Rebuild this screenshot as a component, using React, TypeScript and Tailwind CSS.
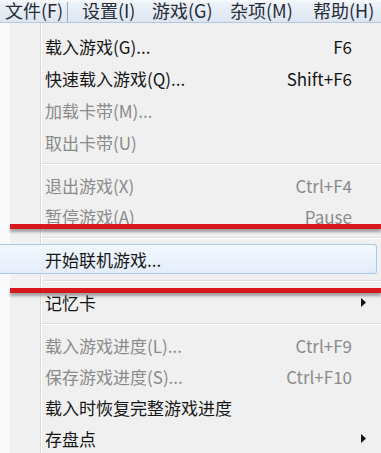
import React from 'react';

type Item = {
  label: string;
  keys?: string;
  disabled?: boolean;
  sub?: boolean;
  hot?: boolean;
  h?: string;
};

type Entry = Item | 'sep';

const entries: Entry[] = [
  { label: '载入游戏(G)...', keys: 'F6', h: 'h-[32px]' },
  { label: '快速载入游戏(Q)...', keys: 'Shift+F6', h: 'h-[32px]' },
  { label: '加载卡带(M)...', disabled: true, h: 'h-[32px]' },
  { label: '取出卡带(U)', disabled: true, h: 'h-[32px]' },
  'sep',
  { label: '退出游戏(X)', keys: 'Ctrl+F4', disabled: true },
  { label: '暂停游戏(A)', keys: 'Pause', disabled: true },
  'sep',
  { label: '开始联机游戏...', hot: true },
  'sep',
  { label: '记忆卡', sub: true },
  'sep',
  { label: '载入游戏进度(L)...', keys: 'Ctrl+F9', disabled: true },
  { label: '保存游戏进度(S)...', keys: 'Ctrl+F10', disabled: true },
  { label: '载入时恢复完整游戏进度' },
  { label: '存盘点', sub: true },
];

const Arrow = () => (
  <svg width="6" height="9" viewBox="0 0 6 9" className="mr-[14px] ml-auto">
    <polygon points="0,0 5,4.5 0,9" fill="#111" />
  </svg>
);

const Row = ({ item }: { item: Item }) => {
  const color = item.disabled ? 'text-[#8a8a8a]' : 'text-[#161616]';
  if (item.hot) {
    return (
      <div className="h-[31px] flex items-start">
        <div className="h-[30px] w-[377px] flex items-center pl-[45px] rounded-r-[3px] border border-l-0 border-[#aac7ec] bg-[linear-gradient(to_bottom,#f2f7fd,#e4edfa)]">
          <span className={color}>{item.label}</span>
        </div>
      </div>
    );
  }
  return (
    <div className={`${item.h ?? 'h-[31px]'} flex items-center pl-[45px] ${color}`}>
      <span className="flex-1">{item.label}</span>
      {item.keys && <span className="pr-[29px]">{item.keys}</span>}
      {item.sub && <Arrow />}
    </div>
  );
};

const Separator = () => (
  <div className="h-[12px] flex items-center pl-[42px]">
    <div className="flex-1 h-0 border-t border-b border-t-[#dedede] border-b-white" />
  </div>
);

const MenuBar = () => (
  <div className="h-[23px] flex flex-col bg-[#f6f8fb]">
    <div className="h-[2px]" />
    <div className="h-[21px] overflow-hidden border-b border-[#b8c6d9] bg-[linear-gradient(to_bottom,#eef3f9,#dce5f1)] text-[18px] leading-[18px] text-[#262c36] whitespace-nowrap">
      <div className="-mt-[1px] flex">
        <div className="w-[68px] h-[24px] pl-[5px] border-r border-[#98a6ba] rounded-br-[3px]">文件(F)</div>
        <div className="ml-[14px] w-[70px]">设置(I)</div>
        <div className="w-[78px]">游戏(G)</div>
        <div className="w-[83px]">杂项(M)</div>
        <div>帮助(H)</div>
      </div>
    </div>
  </div>
);

export default function App() {
  return (
    <div className="relative w-[381px] h-[453px] overflow-hidden bg-white font-['Noto_Sans_CJK_SC','Noto_Sans',sans-serif]">
      <MenuBar />
      <div className="pt-[7px] text-[17px] leading-none bg-[linear-gradient(to_right,#fafafa_10px,#f1f1f1_10px,#f1f1f1_40px,#dadada_40px,#dadada_41px,#ffffff_41px,#ffffff_42px,#f0f0f0_42px)] h-[430px]">
        {entries.map((e, i) => (e === 'sep' ? <Separator key={i} /> : <Row key={i} item={e} />))}
      </div>
      {/* red annotation strokes over the menu */}
      <div className="absolute left-[10px] right-0 top-[224px] h-[5px] bg-[#d7161d] shadow-[0_3px_3px_rgba(0,0,0,0.35)]" />
      <div className="absolute left-[10px] right-0 top-[288px] h-[5px] bg-[#d7161d] shadow-[0_3px_3px_rgba(0,0,0,0.35)]" />
    </div>
  );
}
